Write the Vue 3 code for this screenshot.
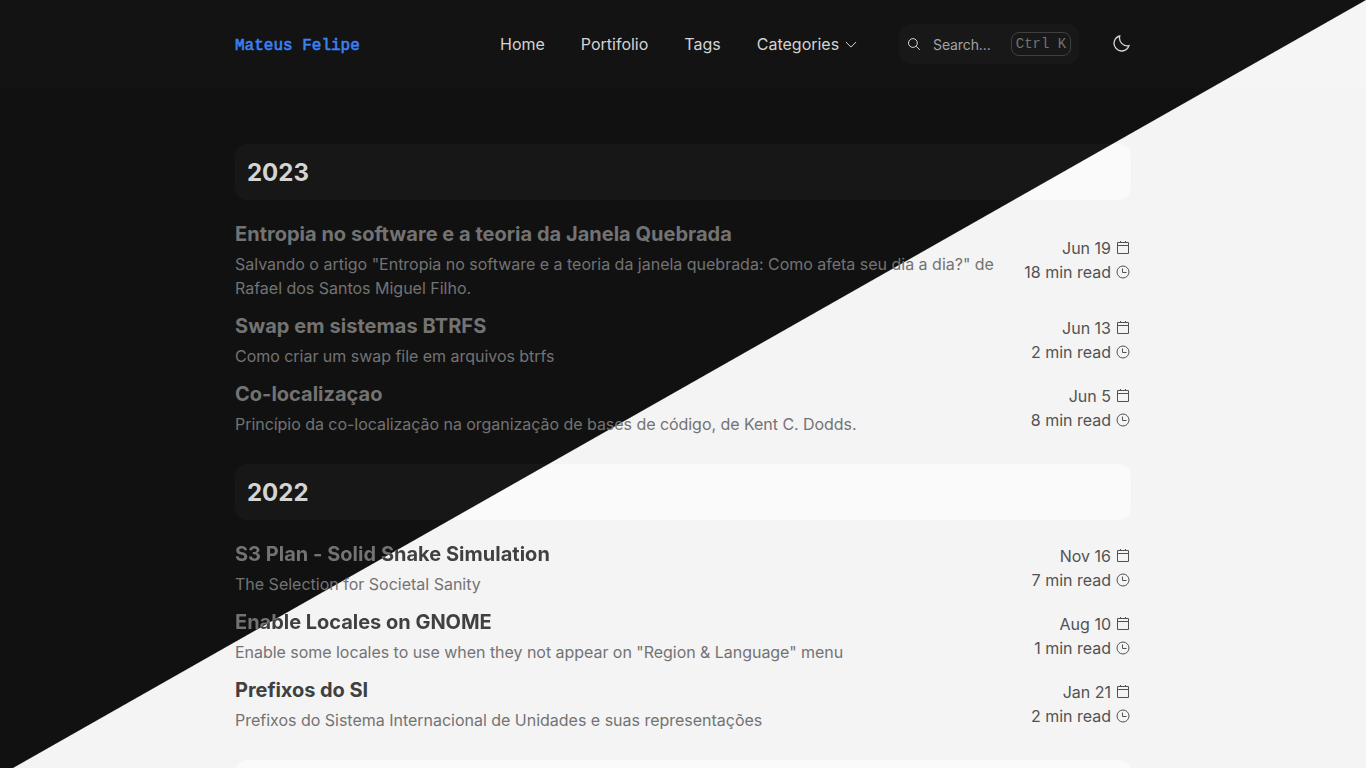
<script setup>
const nav = ['Home', 'Portifolio', 'Tags']
const years = [
  {
    year: '2023',
    posts: [
      {
        title: 'Entropia no software e a teoria da Janela Quebrada',
        text: 'Salvando o artigo "Entropia no software e a teoria da janela quebrada: Como afeta seu dia a dia?" de Rafael dos Santos Miguel Filho.',
        date: 'Jun 19', read: '18 min read', tone: 'muted', track: [0.02, -0.01],
      },
      { title: 'Swap em sistemas BTRFS', text: 'Como criar um swap file em arquivos btrfs', date: 'Jun 13', read: '2 min read', tone: 'muted', track: [0.06, -0.03] },
      { title: 'Co-localizaçao', text: 'Princípio da co-localização na organização de bases de código, de Kent C. Dodds.', date: 'Jun 5', read: '8 min read', tone: 'muted', track: [0, -0.042] },
    ],
  },
  {
    year: '2022',
    posts: [
      { title: 'S3 Plan - Solid Snake Simulation', text: 'The Selection for Societal Sanity', date: 'Nov 16', read: '7 min read', tone: 'split', track: [0.02, 0] },
      { title: 'Enable Locales on GNOME', text: 'Enable some locales to use when they not appear on "Region & Language" menu', date: 'Aug 10', read: '1 min read', tone: 'split', track: [-0.02, -0.037] },
      { title: 'Prefixos do SI', text: 'Prefixos do Sistema Internacional de Unidades e suas representações', date: 'Jan 21', read: '2 min read', tone: 'strong', track: [-0.05, -0.012] },
    ],
  },
  { year: '', posts: [] },
]
</script>

<template>
  <div class="page">
    <header class="bar">
      <div class="inner">
        <a class="brand">Mateus Felipe</a>
        <nav class="nav">
          <a v-for="n in nav" :key="n">{{ n }}</a>
          <a class="drop">Categories
            <svg width="12" height="12" viewBox="0 0 12 12"><path d="M.9 4 6 9.1 11.1 4" /></svg>
          </a>
        </nav>
        <div class="search">
          <svg width="14" height="14" viewBox="0 0 14 14"><circle cx="5.9" cy="6" r="4.4" /><path d="m9.1 9.2 3.7 3.7" /></svg>
          <span>Search...</span>
          <kbd>Ctrl K</kbd>
        </div>
        <svg class="moon" width="18" height="18" viewBox="0 0 18 18"><path d="M6.7 1A7.6 7.6 0 1 0 15.9 10.7 8 8 0 0 1 6.7 1Z" /></svg>
      </div>
    </header>
    <main class="list">
      <section v-for="y in years" :key="y.year">
        <h2>{{ y.year }}</h2>
        <article v-for="p in y.posts" :key="p.title">
          <div class="body">
            <h3 :style="{ letterSpacing: p.track[0] + 'px' }"><span :class="p.tone">{{ p.title }}</span></h3>
            <p :style="{ letterSpacing: p.track[1] + 'px' }">{{ p.text }}</p>
          </div>
          <div class="meta">
            <div>{{ p.date }}
              <svg width="14" height="14" viewBox="0 0 14 14"><path d="M1.5 1.5h11v11h-11zM1.5 4.5h11M4.5 0v1.5M9.5 0v1.5" /></svg>
            </div>
            <div>{{ p.read }}
              <svg width="14" height="14" viewBox="0 0 14 14"><circle cx="7" cy="7" r="6" /><path d="M6.5 3.5v4h4" /></svg>
            </div>
          </div>
        </article>
      </section>
    </main>
  </div>
</template>

<style>
html, body { overflow: hidden; }
</style>

<style scoped>
.page, .bar, h2, .split {
  background: linear-gradient(150.42deg, var(--d) 50.2%, var(--l) 50.28%) fixed;
}
.page {
  --d: #111111;
  --l: #f4f4f4;
  height: 768px;
  overflow: hidden;
  font: 16px/24px Inter, "Liberation Sans", sans-serif;
  color: #525252;
}
svg { fill: none; stroke: currentColor; stroke-width: 1; flex: none; display: block; }
.bar { --d: #131313; --l: #f5f5f5; height: 88px; }
.inner { width: 896px; height: 88px; margin: 0 auto; display: flex; align-items: center; color: #d4d4d4; }
.brand { width: 265px; padding-top: 3px; color: #3b82f6; font: 16px/24px "Liberation Mono", monospace; -webkit-text-stroke: 0.6px #3b82f6; }
.nav { display: flex; gap: 36px; width: 399px; }
.drop { display: flex; align-items: center; gap: 6px; }
.search {
  box-sizing: border-box; width: 180px; height: 40px; border-radius: 12px; background: #181818;
  display: flex; align-items: center; padding: 0 8px;
}
.search span { font-size: 14px; letter-spacing: -0.1px; color: #a3a3a3; margin-left: 12px; flex: 1; padding-top: 2px; }
kbd {
  box-sizing: border-box; width: 60px; height: 24px; border: 1px solid #404040; border-radius: 8px;
  font: 14px/22px "Liberation Mono", monospace; color: #737373; text-align: center; white-space: pre;
}
.moon { margin-left: 34px; stroke-width: 1.3; }
.list { width: 896px; margin: 56px auto 0; }
section { margin-bottom: 28px; }
h2 {
  --d: #171717; --l: #fafafa;
  margin: 0 0 20px; padding: 13px 12px 11px; height: 32px; border-radius: 12px;
  font-size: 24px; line-height: 32px; font-weight: 700; color: #d4d4d4;
}
article { display: flex; justify-content: space-between; align-items: center; margin-bottom: 12px; }
.body { width: 768px; }
h3 { margin: 0 0 4px; font-size: 20px; line-height: 28px; font-weight: 700; }
.muted { color: #737373; }
.strong { color: #404040; }
.split { --d: #737373; --l: #404040; color: transparent; -webkit-background-clip: text; background-clip: text; }
p { margin: 0; color: #737373; }
.meta div { display: flex; justify-content: flex-end; align-items: center; gap: 5px; padding-right: 1px; }
</style>
